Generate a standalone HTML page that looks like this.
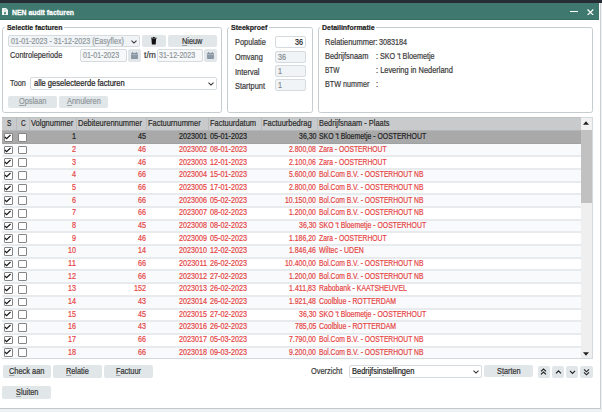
<!DOCTYPE html><html><head><meta charset="utf-8"><style>
html,body{margin:0;padding:0;}
body{width:602px;height:412px;position:relative;overflow:hidden;background:#fff;font-family:"Liberation Sans",sans-serif;}
.a{position:absolute;box-sizing:border-box;}
.t{position:absolute;white-space:nowrap;line-height:1;transform-origin:0 0;-webkit-text-stroke:0.2px currentColor;}
.grp{border:1px solid #c6cdd1;border-radius:2.5px;}
.inp{border:1px solid #d5dbdf;border-radius:2px;background:#f1f4f6;}
.inpw{border:1px solid #d5dbdf;border-radius:2px;background:#fff;}
.btn{background:#e1e6e9;border-radius:2px;}
u{text-decoration:underline;text-underline-offset:0.8px;text-decoration-thickness:0.5px;text-decoration-color:rgba(60,60,60,0.4);}
.cb{position:absolute;width:8.7px;height:8.7px;border:1px solid #858585;border-radius:1px;background:#fff;box-sizing:border-box;}
</style></head><body>

<div class="a " style="left:0.00px;top:0.00px;width:602.00px;height:3.30px;background:#262d34;"></div>
<div class="a " style="left:0.00px;top:3.30px;width:598.70px;height:16.50px;background:#3e786e;"></div>
<div class="a " style="left:0.00px;top:18.50px;width:598.70px;height:1.30px;background:#376d63;"></div>
<div class="a " style="left:598.70px;top:3.30px;width:3.30px;height:408.70px;background:#fff;"></div>
<div class="a " style="left:600.00px;top:3.30px;width:2.00px;height:408.70px;background:#eef1f2;"></div>
<div class="a " style="left:0.00px;top:409.20px;width:602.00px;height:2.80px;background:#eef1f2;"></div>
<div class="a " style="left:599.50px;top:3.30px;width:1.00px;height:406.20px;background:#c8ced1;"></div>
<div class="a " style="left:0.00px;top:407.50px;width:600.00px;height:1.70px;background:#c3c8cb;"></div>
<svg class="a" style="left:2.2px;top:7.9px" width="6" height="7.6" viewBox="0 0 6 7.6"><path d="M0 0.6 Q0 0 0.6 0 H4.1 L6 1.9 V7 Q6 7.6 5.4 7.6 H0.6 Q0 7.6 0 7 Z" fill="#f2f6f5"/><ellipse cx="3.0" cy="1.6" rx="0.8" ry="0.6" fill="#a9c3bd"/><path d="M3 3.2 Q4.1 4.6 3.9 5.5 Q3.7 6.4 3 6.4 Q2.3 6.4 2.1 5.5 Q1.9 4.6 3 3.2 Z" fill="#3e786e"/></svg>
<div class="t" style="left:12.30px;top:9px;font-size:7.9px;font-weight:bold;color:#fff;transform:scaleX(0.8719);-webkit-text-stroke:0.3px #fff;">NEN audit facturen</div>
<div class="a " style="left:569.80px;top:11.30px;width:8.00px;height:1.20px;background:#fff;"></div>
<svg class="a" style="left:587.4px;top:8.5px" width="6.8" height="6.6" viewBox="0 0 6.8 6.6"><path d="M0.5 0.5 L6.3 6.1 M6.3 0.5 L0.5 6.1" stroke="#fff" stroke-width="1.2"/></svg>
<div class="a grp" style="left:2.30px;top:27.30px;width:220.00px;height:85.30px;"></div>
<div class="a " style="left:4.90px;top:26.30px;width:59.10px;height:3.00px;background:#fff;"></div>
<div class="t" style="left:6.70px;top:24px;font-size:7.6px;font-weight:bold;color:#222;transform:scaleX(0.9124);">Selectie facturen</div>
<div class="a grp" style="left:227.00px;top:27.30px;width:85.60px;height:85.30px;"></div>
<div class="a " style="left:229.40px;top:26.30px;width:40.00px;height:3.00px;background:#fff;"></div>
<div class="t" style="left:231.20px;top:24px;font-size:7.6px;font-weight:bold;color:#222;transform:scaleX(0.9267);">Steekproef</div>
<div class="a grp" style="left:317.50px;top:27.30px;width:275.30px;height:85.30px;"></div>
<div class="a " style="left:319.90px;top:26.30px;width:56.20px;height:3.00px;background:#fff;"></div>
<div class="t" style="left:321.70px;top:24px;font-size:7.6px;font-weight:bold;color:#222;transform:scaleX(0.9158);">Detailinformatie</div>
<div class="a inp" style="left:7.60px;top:34.50px;width:132.80px;height:12.80px;"></div>
<div class="t" style="left:10.70px;top:38px;font-size:8.2px;color:#8f979b;transform:scaleX(0.8698);">01-01-2023 - 31-12-2023 (Easyflex)</div>
<svg class="a" style="left:130.70px;top:39.60px" width="6" height="4" viewBox="0 0 6 4"><path d="M0.5 0.6 L3 3.1 L5.5 0.6" fill="none" stroke="#333" stroke-width="1.05"/></svg>
<div class="a btn" style="left:142.30px;top:34.70px;width:23.60px;height:12.40px;"></div>
<svg class="a" style="left:151.3px;top:37px" width="5.6" height="7.6" viewBox="0 0 5.6 7.6"><rect x="0" y="0.7" width="5.6" height="1" fill="#111"/><rect x="1.9" y="0" width="1.8" height="1" fill="#111"/><path d="M0.5 2 H5.1 L4.7 7.6 H0.9 Z" fill="#111"/></svg>
<div class="a btn" style="left:168.00px;top:34.70px;width:48.60px;height:12.40px;"></div><div class="t" style="left:182.16px;top:38px;font-size:8.2px;color:#333;transform:scaleX(0.8902);"><u>N</u>ieuw</div>
<div class="t" style="left:9.90px;top:52px;font-size:8.2px;color:#3a3a3a;transform:scaleX(0.8963);">Controleperiode</div>
<div class="a inp" style="left:80.00px;top:49.00px;width:47.20px;height:12.60px;background:#f6f8f9;"></div>
<div class="t" style="left:82.60px;top:52px;font-size:8.2px;color:#8f979b;transform:scaleX(0.8630);">01-01-2023</div>
<div class="a btn" style="left:128.20px;top:49.00px;width:12.40px;height:12.60px;"></div><svg class="a" style="left:130.90px;top:51.80px" width="7" height="7" viewBox="0 0 7 7"><rect x="0.1" y="1.0" width="6.8" height="6" rx="0.7" fill="#8592a0"/><rect x="1.2" y="0" width="1" height="1.6" fill="#8592a0"/><rect x="4.8" y="0" width="1" height="1.6" fill="#8592a0"/><path d="M0.5 2.6 H6.5" stroke="#e1e6e9" stroke-width="0.5"/><path d="M0.5 4.3 H6.5 M0.5 5.7 H6.5 M2.3 2.6 V7 M4.6 2.6 V7" stroke="#9aa6b2" stroke-width="0.35"/></svg>
<div class="t" style="left:143.80px;top:52px;font-size:8.2px;color:#3a3a3a;transform:scaleX(1.0450);">t/m</div>
<div class="a inp" style="left:156.60px;top:49.00px;width:46.20px;height:12.60px;background:#f6f8f9;"></div>
<div class="t" style="left:158.60px;top:52px;font-size:8.2px;color:#8f979b;transform:scaleX(0.8630);">31-12-2023</div>
<div class="a btn" style="left:204.30px;top:49.00px;width:12.30px;height:12.60px;"></div><svg class="a" style="left:206.95px;top:51.80px" width="7" height="7" viewBox="0 0 7 7"><rect x="0.1" y="1.0" width="6.8" height="6" rx="0.7" fill="#8592a0"/><rect x="1.2" y="0" width="1" height="1.6" fill="#8592a0"/><rect x="4.8" y="0" width="1" height="1.6" fill="#8592a0"/><path d="M0.5 2.6 H6.5" stroke="#e1e6e9" stroke-width="0.5"/><path d="M0.5 4.3 H6.5 M0.5 5.7 H6.5 M2.3 2.6 V7 M4.6 2.6 V7" stroke="#9aa6b2" stroke-width="0.35"/></svg>
<div class="t" style="left:10.00px;top:80px;font-size:8.2px;color:#3a3a3a;transform:scaleX(0.8886);">Toon</div>
<div class="a inpw" style="left:30.20px;top:77.00px;width:186.40px;height:13.00px;"></div>
<div class="t" style="left:33.50px;top:80px;font-size:8.2px;color:#222;transform:scaleX(0.9231);">alle geselecteerde facturen</div>
<svg class="a" style="left:207.50px;top:82.00px" width="6" height="4" viewBox="0 0 6 4"><path d="M0.5 0.6 L3 3.1 L5.5 0.6" fill="none" stroke="#333" stroke-width="1.05"/></svg>
<div class="a btn" style="left:8.00px;top:95.80px;width:48.80px;height:12.10px;"></div><div class="t" style="left:18.71px;top:98px;font-size:8.2px;color:#8f979b;transform:scaleX(0.8967);"><u>O</u>pslaan</div>
<div class="a btn" style="left:58.90px;top:95.80px;width:49.10px;height:12.10px;"></div><div class="t" style="left:66.54px;top:98px;font-size:8.2px;color:#8f979b;transform:scaleX(0.9046);"><u>A</u>nnuleren</div>
<div class="t" style="left:234.60px;top:39px;font-size:8.2px;color:#3a3a3a;transform:scaleX(0.9029);">Populatie</div>
<div class="a inpw" style="left:274.90px;top:36.20px;width:30.80px;height:12.10px;"></div>
<div class="t" style="left:294.77px;top:39px;font-size:8.2px;color:#222;transform:scaleX(0.8805);">36</div>
<div class="t" style="left:234.60px;top:54px;font-size:8.2px;color:#3a3a3a;transform:scaleX(0.8971);">Omvang</div>
<div class="a inp" style="left:274.90px;top:50.80px;width:30.80px;height:12.10px;"></div>
<div class="t" style="left:278.00px;top:54px;font-size:8.2px;color:#858c90;transform:scaleX(0.8805);">36</div>
<div class="t" style="left:234.60px;top:69px;font-size:8.2px;color:#3a3a3a;transform:scaleX(0.9124);">Interval</div>
<div class="a inp" style="left:274.90px;top:64.80px;width:30.80px;height:12.10px;"></div>
<div class="t" style="left:278.00px;top:68px;font-size:8.2px;color:#858c90;transform:scaleX(0.8805);">1</div>
<div class="t" style="left:234.60px;top:83px;font-size:8.2px;color:#3a3a3a;transform:scaleX(0.9023);">Startpunt</div>
<div class="a inp" style="left:274.90px;top:78.70px;width:30.80px;height:12.10px;"></div>
<div class="t" style="left:278.00px;top:82px;font-size:8.2px;color:#858c90;transform:scaleX(0.8805);">1</div>
<div class="t" style="left:325.00px;top:39px;font-size:8.2px;color:#3a3a3a;transform:scaleX(0.9101);">Relatienummer:</div>
<div class="t" style="left:379.30px;top:39px;font-size:8.2px;color:#3a3a3a;transform:scaleX(0.8805);">3083184</div>
<div class="t" style="left:325.00px;top:53px;font-size:8.2px;color:#3a3a3a;transform:scaleX(0.9087);">Bedrijfsnaam</div>
<div class="t" style="left:376.00px;top:53px;font-size:8.2px;color:#3a3a3a;transform:scaleX(0.8797);">: SKO 't Bloemetje</div>
<div class="t" style="left:325.00px;top:67px;font-size:8.2px;color:#3a3a3a;transform:scaleX(0.7963);">BTW</div>
<div class="t" style="left:376.00px;top:67px;font-size:8.2px;color:#3a3a3a;transform:scaleX(0.9074);">: Levering in Nederland</div>
<div class="t" style="left:325.00px;top:81px;font-size:8.2px;color:#3a3a3a;transform:scaleX(0.8774);">BTW nummer</div>
<div class="t" style="left:376.00px;top:81px;font-size:8.2px;color:#3a3a3a;transform:scaleX(0.9220);">:</div>
<div class="a " style="left:2.00px;top:117.00px;width:590.30px;height:242.40px;border:1px solid #d3d9dc;background:#fff;"></div>
<div class="a " style="left:2.00px;top:117.00px;width:578.50px;height:14.00px;background:#c9cacb;"></div>
<div class="t" style="left:7.12px;top:120px;font-size:8.2px;color:#2c2c2c;transform:scaleX(0.7963);">S</div>
<div class="a " style="left:16.10px;top:117.00px;width:1.00px;height:14.00px;background:#babbbc;"></div>
<div class="t" style="left:20.69px;top:120px;font-size:8.2px;color:#2c2c2c;transform:scaleX(0.7963);">C</div>
<div class="a " style="left:29.00px;top:117.00px;width:1.00px;height:14.00px;background:#babbbc;"></div>
<div class="t" style="left:31.10px;top:120px;font-size:8.2px;color:#2c2c2c;transform:scaleX(0.9172);">Volgnummer</div>
<div class="a " style="left:76.00px;top:117.00px;width:1.00px;height:14.00px;background:#babbbc;"></div>
<div class="t" style="left:78.10px;top:120px;font-size:8.2px;color:#2c2c2c;transform:scaleX(0.9125);">Debiteurennummer</div>
<div class="a " style="left:146.00px;top:117.00px;width:1.00px;height:14.00px;background:#babbbc;"></div>
<div class="t" style="left:148.10px;top:120px;font-size:8.2px;color:#2c2c2c;transform:scaleX(0.9122);">Factuurnummer</div>
<div class="a " style="left:208.00px;top:117.00px;width:1.00px;height:14.00px;background:#babbbc;"></div>
<div class="t" style="left:210.10px;top:120px;font-size:8.2px;color:#2c2c2c;transform:scaleX(0.9106);">Factuurdatum</div>
<div class="a " style="left:260.50px;top:117.00px;width:1.00px;height:14.00px;background:#babbbc;"></div>
<div class="t" style="left:262.60px;top:120px;font-size:8.2px;color:#2c2c2c;transform:scaleX(0.9113);">Factuurbedrag</div>
<div class="a " style="left:316.50px;top:117.00px;width:1.00px;height:14.00px;background:#babbbc;"></div>
<div class="t" style="left:318.60px;top:120px;font-size:8.2px;color:#2c2c2c;transform:scaleX(0.9053);">Bedrijfsnaam - Plaats</div>
<div class="a " style="left:2.00px;top:131.00px;width:578.50px;height:12.68px;background:#a9a9aa;"></div>
<div class="cb" style="left:4.1px;top:132.90px"><svg width="9" height="9" viewBox="0 0 9 9" style="position:absolute;left:-1px;top:-1px"><path d="M0.9 4.0 L2.6 5.6 L6.5 2.0" fill="none" stroke="#151515" stroke-width="1.15"/></svg></div>
<div class="cb" style="left:18.1px;top:132.90px"></div>
<div class="t" style="left:72.18px;top:133px;font-size:8.2px;color:#222;transform:scaleX(0.8805);">1</div>
<div class="t" style="left:137.87px;top:133px;font-size:8.2px;color:#222;transform:scaleX(0.8805);">45</div>
<div class="t" style="left:178.99px;top:133px;font-size:8.2px;color:#222;transform:scaleX(0.8805);">2023001</div>
<div class="t" style="left:210.10px;top:133px;font-size:8.2px;color:#222;transform:scaleX(0.8859);">05-01-2023</div>
<div class="t" style="left:298.89px;top:133px;font-size:8.2px;color:#222;transform:scaleX(0.8531);">36,30</div>
<div class="t" style="left:318.80px;top:133px;font-size:8.2px;color:#222;transform:scaleX(0.8427);">SKO 't Bloemetje - OOSTERHOUT</div>
<div class="a " style="left:2.00px;top:143.68px;width:578.50px;height:12.68px;background:#f8fafb;"></div>
<div class="cb" style="left:4.1px;top:145.58px"><svg width="9" height="9" viewBox="0 0 9 9" style="position:absolute;left:-1px;top:-1px"><path d="M0.9 4.0 L2.6 5.6 L6.5 2.0" fill="none" stroke="#151515" stroke-width="1.15"/></svg></div>
<div class="cb" style="left:18.1px;top:145.58px"></div>
<div class="t" style="left:72.18px;top:146px;font-size:8.2px;color:#e64545;transform:scaleX(0.8805);">2</div>
<div class="t" style="left:137.87px;top:146px;font-size:8.2px;color:#e64545;transform:scaleX(0.8805);">46</div>
<div class="t" style="left:178.99px;top:146px;font-size:8.2px;color:#e64545;transform:scaleX(0.8805);">2023002</div>
<div class="t" style="left:210.10px;top:146px;font-size:8.2px;color:#e64545;transform:scaleX(0.8859);">08-01-2023</div>
<div class="t" style="left:289.42px;top:146px;font-size:8.2px;color:#e64545;transform:scaleX(0.8453);">2.800,08</div>
<div class="t" style="left:318.80px;top:146px;font-size:8.2px;color:#e64545;transform:scaleX(0.8258);">Zara - OOSTERHOUT</div>
<div class="a " style="left:2.00px;top:156.36px;width:578.50px;height:12.68px;background:#ffffff;"></div>
<div class="cb" style="left:4.1px;top:158.26px"><svg width="9" height="9" viewBox="0 0 9 9" style="position:absolute;left:-1px;top:-1px"><path d="M0.9 4.0 L2.6 5.6 L6.5 2.0" fill="none" stroke="#151515" stroke-width="1.15"/></svg></div>
<div class="cb" style="left:18.1px;top:158.26px"></div>
<div class="t" style="left:72.18px;top:159px;font-size:8.2px;color:#e64545;transform:scaleX(0.8805);">3</div>
<div class="t" style="left:137.87px;top:159px;font-size:8.2px;color:#e64545;transform:scaleX(0.8805);">46</div>
<div class="t" style="left:178.99px;top:159px;font-size:8.2px;color:#e64545;transform:scaleX(0.8805);">2023003</div>
<div class="t" style="left:210.10px;top:159px;font-size:8.2px;color:#e64545;transform:scaleX(0.8859);">12-01-2023</div>
<div class="t" style="left:289.42px;top:159px;font-size:8.2px;color:#e64545;transform:scaleX(0.8453);">2.100,06</div>
<div class="t" style="left:318.80px;top:159px;font-size:8.2px;color:#e64545;transform:scaleX(0.8258);">Zara - OOSTERHOUT</div>
<div class="a " style="left:2.00px;top:169.04px;width:578.50px;height:12.68px;background:#f8fafb;"></div>
<div class="cb" style="left:4.1px;top:170.94px"><svg width="9" height="9" viewBox="0 0 9 9" style="position:absolute;left:-1px;top:-1px"><path d="M0.9 4.0 L2.6 5.6 L6.5 2.0" fill="none" stroke="#151515" stroke-width="1.15"/></svg></div>
<div class="cb" style="left:18.1px;top:170.94px"></div>
<div class="t" style="left:72.18px;top:171px;font-size:8.2px;color:#e64545;transform:scaleX(0.8805);">4</div>
<div class="t" style="left:137.87px;top:171px;font-size:8.2px;color:#e64545;transform:scaleX(0.8805);">66</div>
<div class="t" style="left:178.99px;top:171px;font-size:8.2px;color:#e64545;transform:scaleX(0.8805);">2023004</div>
<div class="t" style="left:210.10px;top:171px;font-size:8.2px;color:#e64545;transform:scaleX(0.8859);">15-01-2023</div>
<div class="t" style="left:289.42px;top:171px;font-size:8.2px;color:#e64545;transform:scaleX(0.8453);">5.600,00</div>
<div class="t" style="left:318.80px;top:171px;font-size:8.2px;color:#e64545;transform:scaleX(0.8227);">Bol.Com B.V. - OOSTERHOUT NB</div>
<div class="a " style="left:2.00px;top:181.72px;width:578.50px;height:12.68px;background:#ffffff;"></div>
<div class="cb" style="left:4.1px;top:183.62px"><svg width="9" height="9" viewBox="0 0 9 9" style="position:absolute;left:-1px;top:-1px"><path d="M0.9 4.0 L2.6 5.6 L6.5 2.0" fill="none" stroke="#151515" stroke-width="1.15"/></svg></div>
<div class="cb" style="left:18.1px;top:183.62px"></div>
<div class="t" style="left:72.18px;top:184px;font-size:8.2px;color:#e64545;transform:scaleX(0.8805);">5</div>
<div class="t" style="left:137.87px;top:184px;font-size:8.2px;color:#e64545;transform:scaleX(0.8805);">66</div>
<div class="t" style="left:178.99px;top:184px;font-size:8.2px;color:#e64545;transform:scaleX(0.8805);">2023005</div>
<div class="t" style="left:210.10px;top:184px;font-size:8.2px;color:#e64545;transform:scaleX(0.8859);">17-01-2023</div>
<div class="t" style="left:289.42px;top:184px;font-size:8.2px;color:#e64545;transform:scaleX(0.8453);">2.800,00</div>
<div class="t" style="left:318.80px;top:184px;font-size:8.2px;color:#e64545;transform:scaleX(0.8227);">Bol.Com B.V. - OOSTERHOUT NB</div>
<div class="a " style="left:2.00px;top:194.40px;width:578.50px;height:12.68px;background:#f8fafb;"></div>
<div class="cb" style="left:4.1px;top:196.30px"><svg width="9" height="9" viewBox="0 0 9 9" style="position:absolute;left:-1px;top:-1px"><path d="M0.9 4.0 L2.6 5.6 L6.5 2.0" fill="none" stroke="#151515" stroke-width="1.15"/></svg></div>
<div class="cb" style="left:18.1px;top:196.30px"></div>
<div class="t" style="left:72.18px;top:197px;font-size:8.2px;color:#e64545;transform:scaleX(0.8805);">6</div>
<div class="t" style="left:137.87px;top:197px;font-size:8.2px;color:#e64545;transform:scaleX(0.8805);">66</div>
<div class="t" style="left:178.99px;top:197px;font-size:8.2px;color:#e64545;transform:scaleX(0.8805);">2023006</div>
<div class="t" style="left:210.10px;top:197px;font-size:8.2px;color:#e64545;transform:scaleX(0.8859);">05-02-2023</div>
<div class="t" style="left:285.40px;top:197px;font-size:8.2px;color:#e64545;transform:scaleX(0.8497);">10.150,00</div>
<div class="t" style="left:318.80px;top:197px;font-size:8.2px;color:#e64545;transform:scaleX(0.8227);">Bol.Com B.V. - OOSTERHOUT NB</div>
<div class="a " style="left:2.00px;top:207.08px;width:578.50px;height:12.68px;background:#ffffff;"></div>
<div class="cb" style="left:4.1px;top:208.98px"><svg width="9" height="9" viewBox="0 0 9 9" style="position:absolute;left:-1px;top:-1px"><path d="M0.9 4.0 L2.6 5.6 L6.5 2.0" fill="none" stroke="#151515" stroke-width="1.15"/></svg></div>
<div class="cb" style="left:18.1px;top:208.98px"></div>
<div class="t" style="left:72.18px;top:209px;font-size:8.2px;color:#e64545;transform:scaleX(0.8805);">7</div>
<div class="t" style="left:137.87px;top:209px;font-size:8.2px;color:#e64545;transform:scaleX(0.8805);">66</div>
<div class="t" style="left:178.99px;top:209px;font-size:8.2px;color:#e64545;transform:scaleX(0.8805);">2023007</div>
<div class="t" style="left:210.10px;top:209px;font-size:8.2px;color:#e64545;transform:scaleX(0.8859);">08-02-2023</div>
<div class="t" style="left:289.42px;top:209px;font-size:8.2px;color:#e64545;transform:scaleX(0.8453);">1.200,00</div>
<div class="t" style="left:318.80px;top:209px;font-size:8.2px;color:#e64545;transform:scaleX(0.8227);">Bol.Com B.V. - OOSTERHOUT NB</div>
<div class="a " style="left:2.00px;top:219.76px;width:578.50px;height:12.68px;background:#f8fafb;"></div>
<div class="cb" style="left:4.1px;top:221.66px"><svg width="9" height="9" viewBox="0 0 9 9" style="position:absolute;left:-1px;top:-1px"><path d="M0.9 4.0 L2.6 5.6 L6.5 2.0" fill="none" stroke="#151515" stroke-width="1.15"/></svg></div>
<div class="cb" style="left:18.1px;top:221.66px"></div>
<div class="t" style="left:72.18px;top:222px;font-size:8.2px;color:#e64545;transform:scaleX(0.8805);">8</div>
<div class="t" style="left:137.87px;top:222px;font-size:8.2px;color:#e64545;transform:scaleX(0.8805);">45</div>
<div class="t" style="left:178.99px;top:222px;font-size:8.2px;color:#e64545;transform:scaleX(0.8805);">2023008</div>
<div class="t" style="left:210.10px;top:222px;font-size:8.2px;color:#e64545;transform:scaleX(0.8859);">08-02-2023</div>
<div class="t" style="left:298.89px;top:222px;font-size:8.2px;color:#e64545;transform:scaleX(0.8531);">36,30</div>
<div class="t" style="left:318.80px;top:222px;font-size:8.2px;color:#e64545;transform:scaleX(0.8427);">SKO 't Bloemetje - OOSTERHOUT</div>
<div class="a " style="left:2.00px;top:232.44px;width:578.50px;height:12.68px;background:#ffffff;"></div>
<div class="cb" style="left:4.1px;top:234.34px"><svg width="9" height="9" viewBox="0 0 9 9" style="position:absolute;left:-1px;top:-1px"><path d="M0.9 4.0 L2.6 5.6 L6.5 2.0" fill="none" stroke="#151515" stroke-width="1.15"/></svg></div>
<div class="cb" style="left:18.1px;top:234.34px"></div>
<div class="t" style="left:72.18px;top:235px;font-size:8.2px;color:#e64545;transform:scaleX(0.8805);">9</div>
<div class="t" style="left:137.87px;top:235px;font-size:8.2px;color:#e64545;transform:scaleX(0.8805);">46</div>
<div class="t" style="left:178.99px;top:235px;font-size:8.2px;color:#e64545;transform:scaleX(0.8805);">2023009</div>
<div class="t" style="left:210.10px;top:235px;font-size:8.2px;color:#e64545;transform:scaleX(0.8859);">05-02-2023</div>
<div class="t" style="left:289.42px;top:235px;font-size:8.2px;color:#e64545;transform:scaleX(0.8453);">1.186,20</div>
<div class="t" style="left:318.80px;top:235px;font-size:8.2px;color:#e64545;transform:scaleX(0.8258);">Zara - OOSTERHOUT</div>
<div class="a " style="left:2.00px;top:245.12px;width:578.50px;height:12.68px;background:#f8fafb;"></div>
<div class="cb" style="left:4.1px;top:247.02px"><svg width="9" height="9" viewBox="0 0 9 9" style="position:absolute;left:-1px;top:-1px"><path d="M0.9 4.0 L2.6 5.6 L6.5 2.0" fill="none" stroke="#151515" stroke-width="1.15"/></svg></div>
<div class="cb" style="left:18.1px;top:247.02px"></div>
<div class="t" style="left:68.17px;top:247px;font-size:8.2px;color:#e64545;transform:scaleX(0.8805);">10</div>
<div class="t" style="left:137.87px;top:247px;font-size:8.2px;color:#e64545;transform:scaleX(0.8805);">14</div>
<div class="t" style="left:178.99px;top:247px;font-size:8.2px;color:#e64545;transform:scaleX(0.8805);">2023010</div>
<div class="t" style="left:210.10px;top:247px;font-size:8.2px;color:#e64545;transform:scaleX(0.8859);">12-02-2023</div>
<div class="t" style="left:289.42px;top:247px;font-size:8.2px;color:#e64545;transform:scaleX(0.8453);">1.846,46</div>
<div class="t" style="left:318.80px;top:247px;font-size:8.2px;color:#e64545;transform:scaleX(0.8487);">Wiltec - UDEN</div>
<div class="a " style="left:2.00px;top:257.80px;width:578.50px;height:12.68px;background:#ffffff;"></div>
<div class="cb" style="left:4.1px;top:259.70px"><svg width="9" height="9" viewBox="0 0 9 9" style="position:absolute;left:-1px;top:-1px"><path d="M0.9 4.0 L2.6 5.6 L6.5 2.0" fill="none" stroke="#151515" stroke-width="1.15"/></svg></div>
<div class="cb" style="left:18.1px;top:259.70px"></div>
<div class="t" style="left:68.17px;top:260px;font-size:8.2px;color:#e64545;transform:scaleX(0.9434);">11</div>
<div class="t" style="left:137.87px;top:260px;font-size:8.2px;color:#e64545;transform:scaleX(0.8805);">66</div>
<div class="t" style="left:178.99px;top:260px;font-size:8.2px;color:#e64545;transform:scaleX(0.8976);">2023011</div>
<div class="t" style="left:210.10px;top:260px;font-size:8.2px;color:#e64545;transform:scaleX(0.8859);">26-02-2023</div>
<div class="t" style="left:285.40px;top:260px;font-size:8.2px;color:#e64545;transform:scaleX(0.8497);">10.400,00</div>
<div class="t" style="left:318.80px;top:260px;font-size:8.2px;color:#e64545;transform:scaleX(0.8227);">Bol.Com B.V. - OOSTERHOUT NB</div>
<div class="a " style="left:2.00px;top:270.48px;width:578.50px;height:12.68px;background:#f8fafb;"></div>
<div class="cb" style="left:4.1px;top:272.38px"><svg width="9" height="9" viewBox="0 0 9 9" style="position:absolute;left:-1px;top:-1px"><path d="M0.9 4.0 L2.6 5.6 L6.5 2.0" fill="none" stroke="#151515" stroke-width="1.15"/></svg></div>
<div class="cb" style="left:18.1px;top:272.38px"></div>
<div class="t" style="left:68.17px;top:273px;font-size:8.2px;color:#e64545;transform:scaleX(0.8805);">12</div>
<div class="t" style="left:137.87px;top:273px;font-size:8.2px;color:#e64545;transform:scaleX(0.8805);">66</div>
<div class="t" style="left:178.99px;top:273px;font-size:8.2px;color:#e64545;transform:scaleX(0.8805);">2023012</div>
<div class="t" style="left:210.10px;top:273px;font-size:8.2px;color:#e64545;transform:scaleX(0.8859);">27-02-2023</div>
<div class="t" style="left:289.42px;top:273px;font-size:8.2px;color:#e64545;transform:scaleX(0.8453);">1.200,00</div>
<div class="t" style="left:318.80px;top:273px;font-size:8.2px;color:#e64545;transform:scaleX(0.8227);">Bol.Com B.V. - OOSTERHOUT NB</div>
<div class="a " style="left:2.00px;top:283.16px;width:578.50px;height:12.68px;background:#ffffff;"></div>
<div class="cb" style="left:4.1px;top:285.06px"><svg width="9" height="9" viewBox="0 0 9 9" style="position:absolute;left:-1px;top:-1px"><path d="M0.9 4.0 L2.6 5.6 L6.5 2.0" fill="none" stroke="#151515" stroke-width="1.15"/></svg></div>
<div class="cb" style="left:18.1px;top:285.06px"></div>
<div class="t" style="left:68.17px;top:285px;font-size:8.2px;color:#e64545;transform:scaleX(0.8805);">13</div>
<div class="t" style="left:133.85px;top:285px;font-size:8.2px;color:#e64545;transform:scaleX(0.8805);">152</div>
<div class="t" style="left:178.99px;top:285px;font-size:8.2px;color:#e64545;transform:scaleX(0.8805);">2023013</div>
<div class="t" style="left:210.10px;top:285px;font-size:8.2px;color:#e64545;transform:scaleX(0.8859);">26-02-2023</div>
<div class="t" style="left:289.42px;top:285px;font-size:8.2px;color:#e64545;transform:scaleX(0.8618);">1.411,83</div>
<div class="t" style="left:318.80px;top:285px;font-size:8.2px;color:#e64545;transform:scaleX(0.8483);">Rabobank - KAATSHEUVEL</div>
<div class="a " style="left:2.00px;top:295.84px;width:578.50px;height:12.68px;background:#f8fafb;"></div>
<div class="cb" style="left:4.1px;top:297.74px"><svg width="9" height="9" viewBox="0 0 9 9" style="position:absolute;left:-1px;top:-1px"><path d="M0.9 4.0 L2.6 5.6 L6.5 2.0" fill="none" stroke="#151515" stroke-width="1.15"/></svg></div>
<div class="cb" style="left:18.1px;top:297.74px"></div>
<div class="t" style="left:68.17px;top:298px;font-size:8.2px;color:#e64545;transform:scaleX(0.8805);">14</div>
<div class="t" style="left:137.87px;top:298px;font-size:8.2px;color:#e64545;transform:scaleX(0.8805);">43</div>
<div class="t" style="left:178.99px;top:298px;font-size:8.2px;color:#e64545;transform:scaleX(0.8805);">2023014</div>
<div class="t" style="left:210.10px;top:298px;font-size:8.2px;color:#e64545;transform:scaleX(0.8859);">26-02-2023</div>
<div class="t" style="left:289.42px;top:298px;font-size:8.2px;color:#e64545;transform:scaleX(0.8453);">1.921,48</div>
<div class="t" style="left:318.80px;top:298px;font-size:8.2px;color:#e64545;transform:scaleX(0.8430);">Coolblue - ROTTERDAM</div>
<div class="a " style="left:2.00px;top:308.52px;width:578.50px;height:12.68px;background:#ffffff;"></div>
<div class="cb" style="left:4.1px;top:310.42px"><svg width="9" height="9" viewBox="0 0 9 9" style="position:absolute;left:-1px;top:-1px"><path d="M0.9 4.0 L2.6 5.6 L6.5 2.0" fill="none" stroke="#151515" stroke-width="1.15"/></svg></div>
<div class="cb" style="left:18.1px;top:310.42px"></div>
<div class="t" style="left:68.17px;top:311px;font-size:8.2px;color:#e64545;transform:scaleX(0.8805);">15</div>
<div class="t" style="left:137.87px;top:311px;font-size:8.2px;color:#e64545;transform:scaleX(0.8805);">45</div>
<div class="t" style="left:178.99px;top:311px;font-size:8.2px;color:#e64545;transform:scaleX(0.8805);">2023015</div>
<div class="t" style="left:210.10px;top:311px;font-size:8.2px;color:#e64545;transform:scaleX(0.8859);">27-02-2023</div>
<div class="t" style="left:298.89px;top:311px;font-size:8.2px;color:#e64545;transform:scaleX(0.8531);">36,30</div>
<div class="t" style="left:318.80px;top:311px;font-size:8.2px;color:#e64545;transform:scaleX(0.8427);">SKO 't Bloemetje - OOSTERHOUT</div>
<div class="a " style="left:2.00px;top:321.20px;width:578.50px;height:12.68px;background:#f8fafb;"></div>
<div class="cb" style="left:4.1px;top:323.10px"><svg width="9" height="9" viewBox="0 0 9 9" style="position:absolute;left:-1px;top:-1px"><path d="M0.9 4.0 L2.6 5.6 L6.5 2.0" fill="none" stroke="#151515" stroke-width="1.15"/></svg></div>
<div class="cb" style="left:18.1px;top:323.10px"></div>
<div class="t" style="left:68.17px;top:323px;font-size:8.2px;color:#e64545;transform:scaleX(0.8805);">16</div>
<div class="t" style="left:137.87px;top:323px;font-size:8.2px;color:#e64545;transform:scaleX(0.8805);">43</div>
<div class="t" style="left:178.99px;top:323px;font-size:8.2px;color:#e64545;transform:scaleX(0.8805);">2023016</div>
<div class="t" style="left:210.10px;top:323px;font-size:8.2px;color:#e64545;transform:scaleX(0.8859);">26-02-2023</div>
<div class="t" style="left:294.88px;top:323px;font-size:8.2px;color:#e64545;transform:scaleX(0.8581);">785,05</div>
<div class="t" style="left:318.80px;top:323px;font-size:8.2px;color:#e64545;transform:scaleX(0.8430);">Coolblue - ROTTERDAM</div>
<div class="a " style="left:2.00px;top:333.88px;width:578.50px;height:12.68px;background:#ffffff;"></div>
<div class="cb" style="left:4.1px;top:335.78px"><svg width="9" height="9" viewBox="0 0 9 9" style="position:absolute;left:-1px;top:-1px"><path d="M0.9 4.0 L2.6 5.6 L6.5 2.0" fill="none" stroke="#151515" stroke-width="1.15"/></svg></div>
<div class="cb" style="left:18.1px;top:335.78px"></div>
<div class="t" style="left:68.17px;top:336px;font-size:8.2px;color:#e64545;transform:scaleX(0.8805);">17</div>
<div class="t" style="left:137.87px;top:336px;font-size:8.2px;color:#e64545;transform:scaleX(0.8805);">66</div>
<div class="t" style="left:178.99px;top:336px;font-size:8.2px;color:#e64545;transform:scaleX(0.8805);">2023017</div>
<div class="t" style="left:210.10px;top:336px;font-size:8.2px;color:#e64545;transform:scaleX(0.8859);">05-03-2023</div>
<div class="t" style="left:289.42px;top:336px;font-size:8.2px;color:#e64545;transform:scaleX(0.8453);">7.790,00</div>
<div class="t" style="left:318.80px;top:336px;font-size:8.2px;color:#e64545;transform:scaleX(0.8227);">Bol.Com B.V. - OOSTERHOUT NB</div>
<div class="a " style="left:2.00px;top:346.56px;width:578.50px;height:12.68px;background:#f8fafb;"></div>
<div class="cb" style="left:4.1px;top:348.46px"><svg width="9" height="9" viewBox="0 0 9 9" style="position:absolute;left:-1px;top:-1px"><path d="M0.9 4.0 L2.6 5.6 L6.5 2.0" fill="none" stroke="#151515" stroke-width="1.15"/></svg></div>
<div class="cb" style="left:18.1px;top:348.46px"></div>
<div class="t" style="left:68.17px;top:349px;font-size:8.2px;color:#e64545;transform:scaleX(0.8805);">18</div>
<div class="t" style="left:137.87px;top:349px;font-size:8.2px;color:#e64545;transform:scaleX(0.8805);">66</div>
<div class="t" style="left:178.99px;top:349px;font-size:8.2px;color:#e64545;transform:scaleX(0.8805);">2023018</div>
<div class="t" style="left:210.10px;top:349px;font-size:8.2px;color:#e64545;transform:scaleX(0.8859);">09-03-2023</div>
<div class="t" style="left:289.42px;top:349px;font-size:8.2px;color:#e64545;transform:scaleX(0.8453);">9.200,00</div>
<div class="t" style="left:318.80px;top:349px;font-size:8.2px;color:#e64545;transform:scaleX(0.8227);">Bol.Com B.V. - OOSTERHOUT NB</div>
<div class="a " style="left:2.00px;top:143.18px;width:578.50px;height:1.00px;background:#9fa2a4;"></div>
<div class="a " style="left:2.00px;top:155.36px;width:578.50px;height:2.00px;background:#e7ebed;"></div>
<div class="a " style="left:2.00px;top:168.04px;width:578.50px;height:2.00px;background:#e7ebed;"></div>
<div class="a " style="left:2.00px;top:180.72px;width:578.50px;height:2.00px;background:#e7ebed;"></div>
<div class="a " style="left:2.00px;top:193.40px;width:578.50px;height:2.00px;background:#e7ebed;"></div>
<div class="a " style="left:2.00px;top:206.08px;width:578.50px;height:2.00px;background:#e7ebed;"></div>
<div class="a " style="left:2.00px;top:218.76px;width:578.50px;height:2.00px;background:#e7ebed;"></div>
<div class="a " style="left:2.00px;top:231.44px;width:578.50px;height:2.00px;background:#e7ebed;"></div>
<div class="a " style="left:2.00px;top:244.12px;width:578.50px;height:2.00px;background:#e7ebed;"></div>
<div class="a " style="left:2.00px;top:256.80px;width:578.50px;height:2.00px;background:#e7ebed;"></div>
<div class="a " style="left:2.00px;top:269.48px;width:578.50px;height:2.00px;background:#e7ebed;"></div>
<div class="a " style="left:2.00px;top:282.16px;width:578.50px;height:2.00px;background:#e7ebed;"></div>
<div class="a " style="left:2.00px;top:294.84px;width:578.50px;height:2.00px;background:#e7ebed;"></div>
<div class="a " style="left:2.00px;top:307.52px;width:578.50px;height:2.00px;background:#e7ebed;"></div>
<div class="a " style="left:2.00px;top:320.20px;width:578.50px;height:2.00px;background:#e7ebed;"></div>
<div class="a " style="left:2.00px;top:332.88px;width:578.50px;height:2.00px;background:#e7ebed;"></div>
<div class="a " style="left:2.00px;top:345.56px;width:578.50px;height:2.00px;background:#e7ebed;"></div>
<div class="a " style="left:2.00px;top:117.00px;width:578.50px;height:1.00px;background:#bcc1c3;"></div>
<div class="a " style="left:2.00px;top:130.40px;width:578.50px;height:1.00px;background:#b5b6b7;"></div>
<div class="a " style="left:580.50px;top:118.00px;width:11.00px;height:12.00px;background:#f1f1f1;"></div>
<svg class="a" style="left:583.2px;top:121.4px" width="6" height="4" viewBox="0 0 6 4"><path d="M0 3.7 L3 0.3 L6 3.7 Z" fill="#222"/></svg>
<div class="a " style="left:580.50px;top:130.00px;width:11.00px;height:73.30px;background:#c1c1c1;"></div>
<div class="a " style="left:580.50px;top:203.30px;width:11.00px;height:155.30px;background:#efefef;"></div>
<svg class="a" style="left:583.2px;top:352px" width="6" height="4" viewBox="0 0 6 4"><path d="M0 0.3 L3 3.7 L6 0.3 Z" fill="#222"/></svg>
<div class="a btn" style="left:2.70px;top:365.10px;width:48.30px;height:12.50px;"></div><div class="t" style="left:9.13px;top:368px;font-size:8.2px;color:#333;transform:scaleX(0.9039);"><u>C</u>heck aan</div>
<div class="a btn" style="left:53.20px;top:365.10px;width:48.60px;height:12.50px;"></div><div class="t" style="left:66.09px;top:368px;font-size:8.2px;color:#333;transform:scaleX(0.8937);"><u>R</u>elatie</div>
<div class="a btn" style="left:104.20px;top:365.10px;width:48.60px;height:12.50px;"></div><div class="t" style="left:115.99px;top:368px;font-size:8.2px;color:#333;transform:scaleX(0.9003);"><u>F</u>actuur</div>
<div class="a btn" style="left:2.30px;top:386.10px;width:48.90px;height:12.60px;"></div><div class="t" style="left:15.52px;top:389px;font-size:8.2px;color:#333;transform:scaleX(0.8955);"><u>S</u>luiten</div>
<div class="t" style="left:310.80px;top:368px;font-size:8.2px;color:#3a3a3a;transform:scaleX(0.9038);">Overzicht</div>
<div class="a inpw" style="left:349.20px;top:364.80px;width:132.60px;height:12.90px;"></div>
<div class="t" style="left:352.40px;top:368px;font-size:8.2px;color:#222;transform:scaleX(0.9130);">Bedrijfsinstellingen</div>
<svg class="a" style="left:472.50px;top:369.60px" width="6" height="4" viewBox="0 0 6 4"><path d="M0.5 0.6 L3 3.1 L5.5 0.6" fill="none" stroke="#333" stroke-width="1.05"/></svg>
<div class="a btn" style="left:484.40px;top:364.80px;width:48.80px;height:12.50px;"></div><div class="t" style="left:496.94px;top:368px;font-size:8.2px;color:#333;transform:scaleX(0.8969);">S<u>t</u>arten</div>
<div class="a btn" style="left:538.00px;top:365.80px;width:11.90px;height:12.30px;"></div>
<svg class="a" style="left:538.45px;top:368.1px" width="11" height="8" viewBox="0 0 11 8"><path d="M3 3.4 L5.5 1 L8 3.4 M3 6.4 L5.5 4 L8 6.4" fill="none" stroke="#222" stroke-width="1.15"/></svg>
<div class="a btn" style="left:552.30px;top:365.80px;width:12.20px;height:12.30px;"></div>
<svg class="a" style="left:552.90px;top:368.1px" width="11" height="8" viewBox="0 0 11 8"><path d="M3 5.4 L5.5 2.9 L8 5.4" fill="none" stroke="#222" stroke-width="1.15"/></svg>
<div class="a btn" style="left:566.20px;top:365.80px;width:12.20px;height:12.30px;"></div>
<svg class="a" style="left:566.80px;top:368.1px" width="11" height="8" viewBox="0 0 11 8"><path d="M3 2.9 L5.5 5.4 L8 2.9" fill="none" stroke="#222" stroke-width="1.15"/></svg>
<div class="a btn" style="left:580.40px;top:365.80px;width:12.30px;height:12.30px;"></div>
<svg class="a" style="left:581.05px;top:368.1px" width="11" height="8" viewBox="0 0 11 8"><path d="M3 1.4 L5.5 3.8 L8 1.4 M3 4.4 L5.5 6.8 L8 4.4" fill="none" stroke="#222" stroke-width="1.15"/></svg>
<div class="a " style="left:591.50px;top:117.00px;width:1.00px;height:242.40px;background:#d3d9dc;"></div>
<div class="a " style="left:2.00px;top:358.40px;width:590.50px;height:1.00px;background:#d3d9dc;"></div>
</body></html>
